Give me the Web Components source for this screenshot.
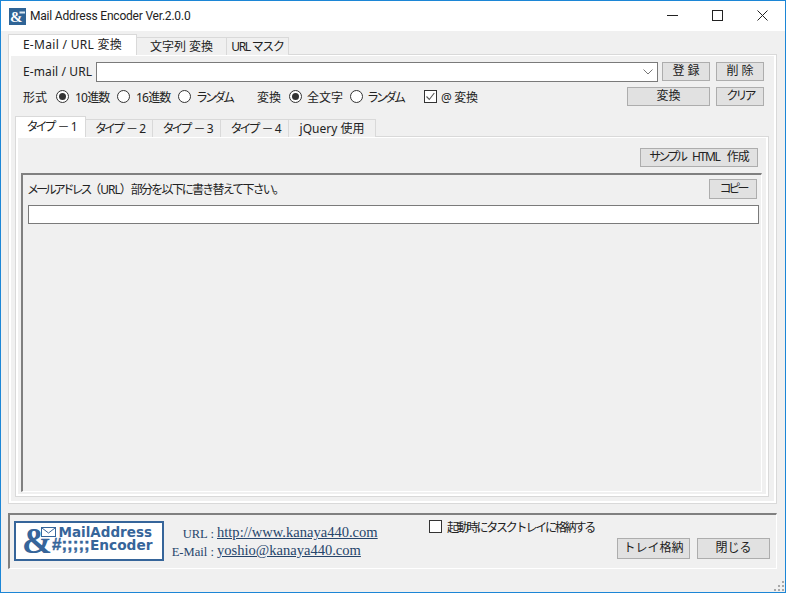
<!DOCTYPE html>
<html lang="ja">
<head>
<meta charset="utf-8">
<title>Mail Address Encoder</title>
<style>
    html, body { margin: 0; padding: 0; background: #f0f0f0; }
    body {
        font: 12px "Noto Sans", "Noto Sans CJK JP", sans-serif;
        color: #222;
    }
</style>
</head>
<body>
<app-window>
    <title-bar slot="title">Mail Address Encoder Ver.2.0.0</title-bar>

    <tab-panel slot="main" class="outer">
        <tab-label slot="tabs" active w="129" style="letter-spacing:.3px">E-Mail / URL 変換</tab-label>
        <tab-label slot="tabs" w="91">文字列 変換</tab-label>
        <tab-label slot="tabs" w="63" style="letter-spacing:-1.3px">URL マスク</tab-label>
        <encoder-page></encoder-page>
    </tab-panel>

    <footer-bar slot="footer"></footer-bar>
</app-window>

<script>
class AppWindow extends HTMLElement {
    constructor() {
        super();
        this.attachShadow({ mode: 'open' });
        this.shadowRoot.innerHTML = `
            <style>
                :host {
                    display: flex;
                    flex-direction: column;
                    box-sizing: border-box;
                    width: 786px;
                    height: 593px;
                    border: 1px solid #1c86d6;
                    background: #f0f0f0;
                    overflow: hidden;
                }
                .main { display: block; margin: 4px 8px 0 7px; }
                .footer { display: block; margin: 9px 8px 0 7px; }
                .grip { flex: 1; display: flex; justify-content: flex-end; align-items: flex-end; }
                .grip svg { display: block; }
            </style>
            <slot name="title"></slot>
            <div class="main"><slot name="main"></slot></div>
            <div class="footer"><slot name="footer"></slot></div>
            <div class="grip">
                <svg width="12" height="12" viewBox="0 0 12 12" fill="#a8a8a8">
                    <rect x="9" y="1" width="2" height="2"/>
                    <rect x="5" y="5" width="2" height="2"/><rect x="9" y="5" width="2" height="2"/>
                    <rect x="1" y="9" width="2" height="2"/><rect x="5" y="9" width="2" height="2"/><rect x="9" y="9" width="2" height="2"/>
                </svg>
            </div>
        `;
    }
}

class TitleBar extends HTMLElement {
    constructor() {
        super();
        this.attachShadow({ mode: 'open' });
        this.shadowRoot.innerHTML = `
            <style>
                :host {
                    display: flex;
                    align-items: center;
                    height: 30px;
                    background: #fff;
                    padding-left: 8px;
                    flex: none;
                }
                .icon { display: block; width: 17px; height: 17px; margin-right: 4px; }
                .name { flex: 1; font: 12px Roboto, sans-serif; letter-spacing: -.2px; color: #222; }
                .ctl { width: 45px; height: 28px; padding-bottom: 2px; display: flex; align-items: center; justify-content: center; }
                .ctl svg { display: block; }
                .ctl path, .ctl rect { fill: none; stroke: #222; stroke-width: 1; }
            </style>
            <svg class="icon" viewBox="0 0 17 17">
                <rect width="17" height="17" fill="#2f6496"/>
                <text x="1" y="13.5" font-family="'Liberation Serif', serif" font-weight="700" font-size="15" fill="#fff">&amp;</text>
                <path d="M10.5 4.5h5.5" stroke="#dce8f2" stroke-width="2" fill="none"/>
            </svg>
            <span class="name"><slot></slot></span>
            <span class="ctl"><svg width="11" height="11"><path d="M0 5.5h11"/></svg></span>
            <span class="ctl"><svg width="11" height="11"><rect x=".5" y=".5" width="10" height="10"/></svg></span>
            <span class="ctl"><svg width="11" height="11"><path d="M.5 .5l10 10M10.5 .5l-10 10"/></svg></span>
        `;
    }
}

class TabPanel extends HTMLElement {
    constructor() {
        super();
        this.attachShadow({ mode: 'open' });
        this.shadowRoot.innerHTML = `
            <style>
                :host { display: block; }
                .tabs { display: flex; align-items: flex-end; height: 20px; position: relative; z-index: 1; margin-bottom: -1px; }
                .body {
                    border: 1px solid #d9d9d9;
                    background: #fff;
                    padding: 1px 2px 2px 2px;
                }
                .page { background: #f0f0f0; }
            </style>
            <div class="tabs"><slot name="tabs"></slot></div>
            <div class="body"><div class="page"><slot></slot></div></div>
        `;
    }
}

class TabLabel extends HTMLElement {
    constructor() {
        super();
        this.attachShadow({ mode: 'open' });
        const w = this.getAttribute('w');
        this.shadowRoot.innerHTML = `
            <style>
                :host {
                    display: block;
                    flex: none;
                    box-sizing: border-box;
                    width: ${w}px;
                    height: 18px;
                    border: 1px solid #d9d9d9;
                    border-bottom: 0;
                    margin-left: -1px;
                    background: #f0f0f0;
                    text-align: center;
                    line-height: 17px;
                    white-space: nowrap;
                }
                :host(:first-child) { margin-left: 0; }
                :host([active]) {
                    height: 21px;
                    line-height: 20px;
                    background: #fff;
                    position: relative;
                    z-index: 1;
                }
            </style>
            <slot></slot>
        `;
    }
}

class PushButton extends HTMLElement {
    constructor() {
        super();
        this.attachShadow({ mode: 'open' });
        const w = this.getAttribute('w') || 48;
        const h = this.getAttribute('h') || 19;
        this.shadowRoot.innerHTML = `
            <style>
                :host {
                    display: block;
                    flex: none;
                    box-sizing: border-box;
                    width: ${w}px;
                    height: ${h}px;
                    border: 1px solid #adadad;
                    background: #e1e1e1;
                    text-align: center;
                    line-height: ${h - 3}px;
                    white-space: nowrap;
                }
            </style>
            <slot></slot>
        `;
    }
}

class RadioOption extends HTMLElement {
    constructor() {
        super();
        this.attachShadow({ mode: 'open' });
        const dot = this.hasAttribute('checked') ? '<circle cx="6.5" cy="6.5" r="3.5" fill="#333"/>' : '';
        this.shadowRoot.innerHTML = `
            <style>
                :host { display: flex; align-items: center; gap: 5px; white-space: nowrap; flex: none; box-sizing: border-box; }
                svg { display: block; flex: none; }
            </style>
            <svg width="13" height="13" viewBox="0 0 13 13">
                <circle cx="6.5" cy="6.5" r="6" fill="#fff" stroke="#333"/>
                ${dot}
            </svg>
            <span><slot></slot></span>
        `;
    }
}

class CheckOption extends HTMLElement {
    constructor() {
        super();
        this.attachShadow({ mode: 'open' });
        const tick = this.hasAttribute('checked') ? '<path d="M2.5 6.5l2.8 3 5-6.5" fill="none" stroke="#555" stroke-width="1.1"/>' : '';
        this.shadowRoot.innerHTML = `
            <style>
                :host { display: flex; align-items: center; gap: 4px; white-space: nowrap; flex: none; }
                svg { display: block; flex: none; }
            </style>
            <svg width="13" height="13" viewBox="0 0 13 13">
                <rect x=".5" y=".5" width="12" height="12" fill="#fff" stroke="#333"/>
                ${tick}
            </svg>
            <span><slot></slot></span>
        `;
    }
}

class EncoderPage extends HTMLElement {
    constructor() {
        super();
        this.attachShadow({ mode: 'open' });
        this.shadowRoot.innerHTML = `
            <style>
                :host { display: block; box-sizing: border-box; height: 445px; padding: 6px 5px 0 4px; }
                .row { display: flex; align-items: flex-start; }
                .label { width: 81px; padding-left: 8px; box-sizing: border-box; white-space: nowrap; flex: none; line-height: 20px; letter-spacing: .1px; }
                .combo {
                    box-sizing: border-box;
                    flex: none;
                    width: 562px;
                    height: 20px;
                    border: 1px solid #7a7a7a;
                    background: #fff;
                    display: flex;
                    justify-content: flex-end;
                    align-items: center;
                    padding-right: 4px;
                    margin-right: 4px;
                }
                .combo svg { display: block; }
                .gap { margin-left: 6px; }
                .opts { height: 19px; margin-top: 5px; align-items: center; padding-right: 5px; }
                .opts .t { white-space: nowrap; flex: none; }
                .opts .spacer { flex: 1; }
                .kana { letter-spacing: -3px; }
                .tabs { display: block; margin-top: 11px; }
                .tab-k { letter-spacing: -3px; word-spacing: 4px; }
            </style>
            <div class="row">
                <span class="label">E-mail / URL</span>
                <div class="combo">
                    <svg width="10" height="6" viewBox="0 0 10 6"><path d="M.5 .5L5 5l4.5-4.5" fill="none" stroke="#777"/></svg>
                </div>
                <push-button w="48">登 録</push-button>
                <push-button class="gap" w="48">削 除</push-button>
            </div>
            <div class="row opts">
                <span class="t" style="margin-left:8px;width:33px">形式</span>
                <radio-option checked style="width:61px;letter-spacing:-.8px;gap:6px">10進数</radio-option>
                <radio-option style="width:61px;letter-spacing:-.8px;gap:6px">16進数</radio-option>
                <radio-option class="kana" style="width:79px">ランダム</radio-option>
                <span class="t" style="width:32px">変換</span>
                <radio-option checked style="width:61px">全文字</radio-option>
                <radio-option class="kana" style="width:74px;gap:4px">ランダム</radio-option>
                <check-option checked style="letter-spacing:-.3px">@ 変換</check-option>
                <span class="spacer"></span>
                <push-button w="83">変換</push-button>
                <push-button class="gap" w="48" style="letter-spacing:-3px">クリア</push-button>
            </div>
            <tab-panel class="tabs">
                <tab-label class="tab-k" slot="tabs" active w="71">タイプ － 1</tab-label>
                <tab-label class="tab-k" slot="tabs" w="68">タイプ － 2</tab-label>
                <tab-label class="tab-k" slot="tabs" w="69">タイプ － 3</tab-label>
                <tab-label class="tab-k" slot="tabs" w="69">タイプ － 4</tab-label>
                <tab-label slot="tabs" w="88">jQuery 使用</tab-label>
                <type-page></type-page>
            </tab-panel>
        `;
    }
}

class TypePage extends HTMLElement {
    constructor() {
        super();
        this.attachShadow({ mode: 'open' });
        this.shadowRoot.innerHTML = `
            <style>
                :host { display: block; box-sizing: border-box; height: 356px; padding: 10px 4px 0 3px; }
                .top { display: flex; justify-content: flex-end; padding-right: 4px; }
                .group {
                    box-sizing: border-box;
                    height: 319px;
                    margin-top: 6px;
                    border-style: solid;
                    border-width: 2px 1px 1px 2px;
                    border-color: #808080 #fff #fff #808080;
                    padding: 4px 2px 0 5px;
                }
                .line { display: flex; justify-content: space-between; align-items: center; padding-right: 2px; }
                .msg { margin-left: -1px; white-space: nowrap; }
                .msg .a { letter-spacing: -3.1px; }
                .msg .b { letter-spacing: -1px; }
                .msg .c { letter-spacing: -1.8px; }
                .field {
                    box-sizing: border-box;
                    height: 19px;
                    width: 731px;
                    margin-top: 6px;
                    border: 1px solid #7a7a7a;
                    background: #fff;
                }
                .s-k { letter-spacing: -3px; }
                .s-l { letter-spacing: -1.3px; margin: 0 4px; }
                .s-c { letter-spacing: -1px; }
            </style>
            <div class="top">
                <push-button w="118" h="19"><span class="s-k">サンプル</span> <span class="s-l">HTML</span> <span class="s-c">作成</span></push-button>
            </div>
            <div class="group">
                <div class="line">
                    <span class="msg"><span class="a">メールアドレス</span><span class="b">（URL）</span><span class="c">部分を以下に書き替えて下さい。</span></span>
                    <push-button w="48" h="20" style="letter-spacing:-3px">コピー</push-button>
                </div>
                <div class="field"></div>
            </div>
        `;
    }
}

class FooterBar extends HTMLElement {
    constructor() {
        super();
        this.attachShadow({ mode: 'open' });
        this.shadowRoot.innerHTML = `
            <style>
                :host {
                    display: flex;
                    box-sizing: border-box;
                    height: 56px;
                    border-style: solid;
                    border-width: 2px 1px 1px 2px;
                    border-color: #808080 #fff #fff #808080;
                    padding: 5px 6px 0 4px;
                }
                .logo { display: block; flex: none; width: 150px; height: 40px; margin-top: 1px; }
                .contact {
                    display: grid;
                    grid-template-columns: 50px auto;
                    grid-auto-rows: 18px;
                    align-content: start;
                    column-gap: 3px;
                    margin-top: 3px;
                    width: 265px;
                    flex: none;
                    font-family: "Liberation Serif", serif;
                    color: #26456b;
                }
                .k { text-align: right; font-size: 12.6px; line-height: 18px; transform: translateY(2px); white-space: nowrap; }
                .v { font-size: 14.55px; line-height: 18px; text-decoration: underline; white-space: nowrap; }
                .right { flex: 1; display: flex; flex-direction: column; }
                .right check-option { height: 13px; gap: 5px; letter-spacing: -2.2px; }
                .btns { display: flex; justify-content: flex-end; gap: 7px; margin-top: 5px; }
            </style>
            <svg class="logo" viewBox="0 0 150 40">
                <rect x="1" y="1" width="148" height="38" fill="#fff" stroke="#36659a" stroke-width="2"/>
                <text x="8" y="32" font-family="'Liberation Serif', serif" font-weight="700" font-size="36" fill="#36659a">&amp;</text>
                <rect x="27.5" y="6.5" width="14" height="9" fill="#fff" stroke="#36659a"/>
                <path d="M28 7l6.5 5 6.5-5" fill="none" stroke="#36659a"/>
                <text x="44.5" y="16" font-family="'DejaVu Sans', sans-serif" font-weight="700" font-size="13.5" fill="#36659a">MailAddress</text>
                <text x="38" y="29" font-family="'Liberation Sans', sans-serif" font-weight="700" font-size="17" stroke="#36659a" stroke-width=".4" fill="#36659a">#;;;;;</text>
                <text x="76" y="29" font-family="'DejaVu Sans', sans-serif" font-weight="700" font-size="13.7" fill="#36659a">Encoder</text>
            </svg>
            <div class="contact">
                <span class="k">URL :</span><span class="v">http://www.kanaya440.com</span>
                <span class="k">E-Mail :</span><span class="v">yoshio@kanaya440.com</span>
            </div>
            <div class="right">
                <check-option>起動時にタスクトレイに格納する</check-option>
                <div class="btns">
                    <push-button w="73" h="21">トレイ格納</push-button>
                    <push-button w="73" h="21">閉じる</push-button>
                </div>
            </div>
        `;
    }
}

customElements.define('app-window', AppWindow);
customElements.define('title-bar', TitleBar);
customElements.define('tab-panel', TabPanel);
customElements.define('tab-label', TabLabel);
customElements.define('push-button', PushButton);
customElements.define('radio-option', RadioOption);
customElements.define('check-option', CheckOption);
customElements.define('encoder-page', EncoderPage);
customElements.define('type-page', TypePage);
customElements.define('footer-bar', FooterBar);
</script>
</body>
</html>
